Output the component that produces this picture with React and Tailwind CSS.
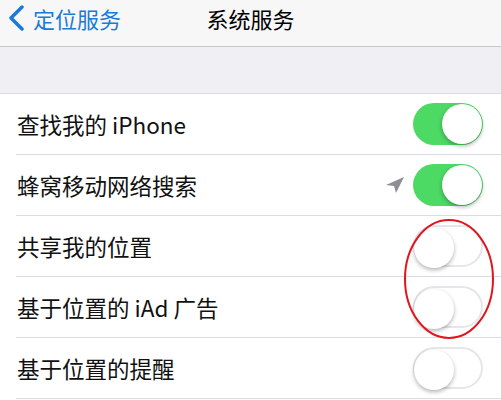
const rows = [
  { label: "查找我的 iPhone", on: true },
  { label: "蜂窝移动网络搜索", on: true, arrow: true },
  { label: "共享我的位置", on: false },
  { label: "基于位置的 iAd 广告", on: false },
  { label: "基于位置的提醒", on: false },
];

const Toggle = ({ on }) => (
  <div
    className={`relative w-[70px] h-[42px] rounded-full ${
      on ? "bg-[#4cd964]" : "bg-white border-2 border-[#e5e5ea]"
    }`}
  >
    <div
      className={`absolute top-[1px] w-[40px] h-[40px] rounded-full bg-white shadow-[0_2px_4px_rgba(0,0,0,0.3)] ${
        on ? "right-[1px]" : "left-[-1px] top-[-1px]"
      }`}
    />
  </div>
);

const App = () => {
  return (
    <div
      className="relative w-[501px] h-[400px] overflow-hidden bg-white"
      style={{ fontFamily: '"Noto Sans CJK SC", "Noto Sans", sans-serif' }}
    >
      {/* nav bar */}
      <div className="h-[47px] bg-[#f7f7f8] border-b border-[#c8c7cc] flex items-start pt-[2px] relative">
        <div className="flex items-center pl-[8px] h-[32px]">
          <svg width="17" height="26" viewBox="0 0 17 26">
            <path d="M14 2 L3 13 L14 24" fill="none" stroke="#1a7ad6" strokeWidth="3.5" strokeLinecap="round" strokeLinejoin="round" />
          </svg>
          <span className="ml-[8px] text-[22px] leading-none text-[#1a7ad6]">定位服务</span>
        </div>
        <div className="absolute left-0 right-0 top-[2px] h-[32px] flex items-center justify-center pointer-events-none">
          <span className="text-[22px] leading-none text-black">系统服务</span>
        </div>
      </div>

      {/* section gap */}
      <div className="h-[47px] bg-[#efeff4] border-b border-[#dcdce0]" />

      {/* rows */}
      <div className="bg-white">
        {rows.map((r) => (
          <div key={r.label} className="pl-[16px]">
            <div className="h-[61px] flex items-center justify-between pr-[18px] border-b border-[#dcdce0]">
              <span className="pl-[1px] text-[22.5px] leading-none text-[#111]">{r.label}</span>
              <div className="flex items-center gap-[8px]">
                {r.arrow && (
                  <svg width="20" height="18" viewBox="0 0 20 18">
                    <path d="M19 1 L1 9 L9 10 L11 17 Z" fill="#8e8e93" />
                  </svg>
                )}
                <Toggle on={r.on} />
              </div>
            </div>
          </div>
        ))}
      </div>

      {/* red annotation */}
      <svg className="absolute left-[402px] top-[217px]" width="94" height="124" viewBox="0 0 94 124">
        <ellipse cx="47" cy="62" rx="44" ry="59" fill="none" stroke="#e0161e" strokeWidth="2" />
      </svg>
    </div>
  );
};

export default App;
